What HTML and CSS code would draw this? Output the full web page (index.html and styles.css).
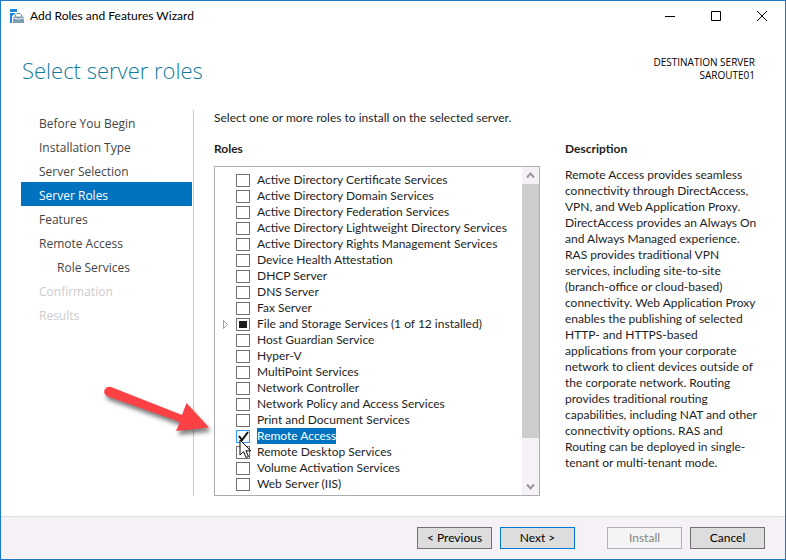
FILE: index.html
```html
<!DOCTYPE html>
<html lang="en">
<head>
    <meta charset="UTF-8">
    <meta name="viewport" content="width=device-width, initial-scale=1.0">
    <title>Add Roles and Features Wizard</title>
    <link rel="stylesheet" href="styles.css">
</head>
<body>
    <div class="window">
        <!-- Title bar -->
        <header class="titlebar">
            <svg class="app-icon" width="16" height="16" viewBox="0 0 16 16">
                <path fill="#1e88e0" d="M1 1h7v3H1zM1 5h5v1L3 8v7H1z"/>
                <path fill="none" stroke="#6f8ea3" d="M6.500 8.500V7l1.500-1.500h3L12.500 7v1.500"/>
                <path fill="#7d9db3" d="M4 9.500L5 8.500h9l1 1V15H4z"/>
                <path fill="none" stroke="#dbe6ed" d="M4 10.500h4.500v1h2v-1H15"/>
            </svg>
            <span class="title">Add Roles and Features Wizard</span>
            <button class="caption-btn" aria-label="Minimize">
                <svg width="10" height="10"><path d="M0 5.500h10"/></svg>
            </button>
            <button class="caption-btn" aria-label="Maximize">
                <svg width="10" height="10"><path d="M.5.5h9v9h-9z"/></svg>
            </button>
            <button class="caption-btn" aria-label="Close">
                <svg width="10" height="10"><path d="M0 0l10 10M10 0L0 10"/></svg>
            </button>
        </header>

        <!-- Page heading -->
        <div class="heading">
            <h1>Select server roles</h1>
            <div class="destination">DESTINATION SERVER<br>SAROUTE01</div>
        </div>

        <div class="content">
            <!-- Wizard steps -->
            <nav class="steps">
                <a href="#">Before You Begin</a>
                <a href="#">Installation Type</a>
                <a href="#">Server Selection</a>
                <a href="#" class="current">Server Roles</a>
                <a href="#">Features</a>
                <a href="#">Remote Access</a>
                <a href="#" class="sub">Role Services</a>
                <a class="disabled">Confirmation</a>
                <a class="disabled">Results</a>
            </nav>

            <main class="page">
                <p class="intro">Select one or more roles to install on the selected server.</p>
                <div class="columns">
                    <section class="roles">
                        <h2>Roles</h2>
                        <div class="role-box">
                            <div class="role-list">
                                <label><input type="checkbox"><span>Active Directory Certificate Services</span></label>
                                <label><input type="checkbox"><span>Active Directory Domain Services</span></label>
                                <label><input type="checkbox"><span>Active Directory Federation Services</span></label>
                                <label><input type="checkbox"><span>Active Directory Lightweight Directory Services</span></label>
                                <label><input type="checkbox"><span>Active Directory Rights Management Services</span></label>
                                <label><input type="checkbox"><span>Device Health Attestation</span></label>
                                <label><input type="checkbox"><span>DHCP Server</span></label>
                                <label><input type="checkbox"><span>DNS Server</span></label>
                                <label><input type="checkbox"><span>Fax Server</span></label>
                                <label>
                                    <svg class="expander" width="6" height="9"><path d="M.5.5v8l4-4z"/></svg>
                                    <input type="checkbox" class="partial"><span>File and Storage Services (1 of 12 installed)</span>
                                </label>
                                <label><input type="checkbox"><span>Host Guardian Service</span></label>
                                <label><input type="checkbox"><span>Hyper-V</span></label>
                                <label><input type="checkbox"><span>MultiPoint Services</span></label>
                                <label><input type="checkbox"><span>Network Controller</span></label>
                                <label><input type="checkbox"><span>Network Policy and Access Services</span></label>
                                <label><input type="checkbox"><span>Print and Document Services</span></label>
                                <label class="selected">
                                    <input type="checkbox" checked><span>Remote Access</span>
                                    <!-- Red arrow pointing at the role -->
                                    <svg class="callout" width="112" height="60" viewBox="0 0 112 60">
                                        <path d="M4.500 7a5 5 0 0 1 6.500-3L82 32l4.500-12L109 44.500 76 48l4-9L8 13.500A5 5 0 0 1 4.500 7z"/>
                                    </svg>
                                    <svg class="pointer" width="13" height="20" viewBox="0 0 13 20">
                                        <path d="M1 1v15l3.500-3.300 2.600 5.800 2.400-1-2.600-5.700h4.800z"/>
                                    </svg>
                                </label>
                                <label><input type="checkbox"><span>Remote Desktop Services</span></label>
                                <label><input type="checkbox"><span>Volume Activation Services</span></label>
                                <label><input type="checkbox"><span>Web Server (IIS)</span></label>
                            </div>
                            <div class="scrollbar">
                                <svg width="17" height="17"><path d="M5 10.500l3.500-4 3.500 4"/></svg>
                                <div class="thumb"></div>
                                <div class="track"></div>
                                <svg width="17" height="17"><path d="M5 6.500l3.500 4 3.500-4"/></svg>
                            </div>
                        </div>
                    </section>

                    <section class="description">
                        <h2>Description</h2>
                        <p>Remote Access provides seamless connectivity through DirectAccess, VPN, and Web Application Proxy. DirectAccess provides an Always On and Always Managed experience. RAS provides traditional VPN services, including site-to-site (branch-office or cloud-based) connectivity. Web Application Proxy enables the publishing of selected HTTP- and HTTPS-based applications from your corporate network to client devices outside of the corporate network. Routing provides traditional routing capabilities, including NAT and other connectivity options. RAS and Routing can be deployed in single-tenant or multi-tenant mode.</p>
                    </section>
                </div>
            </main>
        </div>

        <!-- Wizard buttons -->
        <footer class="buttons">
            <button>&lt; Previous</button>
            <button class="default">Next &gt;</button>
            <button class="install" disabled>Install</button>
            <button>Cancel</button>
        </footer>
    </div>
</body>
</html>
```
FILE: styles.css
```css
* {
    box-sizing: border-box;
}

body {
    margin: 0;
    font-family: Lato, "Open Sans", sans-serif;
    font-size: 12px;
    line-height: 16px;
    color: #1e1e1e;
}

h1, h2, p {
    margin: 0;
}

button, input {
    font: inherit;
    margin: 0;
}

.window {
    display: flex;
    flex-direction: column;
    min-height: 100vh;
    border: 1px solid #1979ca;
    background-color: #fff;
}

/* Title bar */
.titlebar {
    display: flex;
    align-items: center;
    height: 29px;
    padding-left: 8px;
    color: #000;
}

.title {
    flex: 1;
    margin-left: 5px;
}

.caption-btn {
    display: flex;
    justify-content: center;
    align-items: center;
    width: 46px;
    height: 28px;
    padding: 0;
    border: none;
    background: none;
}

.caption-btn svg {
    fill: none;
    stroke: #000;
    overflow: visible;
}

/* Heading */
.heading {
    display: flex;
    justify-content: space-between;
    height: 80px;
    padding: 24px 30px 0 21px;
}

h1 {
    font-family: "Open Sans", sans-serif;
    font-size: 22px;
    font-weight: 300;
    line-height: 32px;
    color: #107c9e;
}

.destination {
    font-family: "Open Sans", sans-serif;
    font-size: 10px;
    line-height: 13px;
    padding-top: 2px;
    text-align: right;
    color: #000;
}

.content {
    flex: 1;
    display: flex;
    padding: 0 20px 20px;
}

/* Steps on the left */
.steps {
    width: 173px;
    flex-shrink: 0;
    padding-right: 1px;
    border-right: 1px solid #ccc;
    font-family: "Open Sans", sans-serif;
    font-size: 12px;
}

.steps a {
    display: block;
    height: 24px;
    padding-top: 2px;
    padding-left: 18px;
    line-height: 24px;
    color: #444;
    text-decoration: none;
}

.steps .current {
    background-color: #0072c0;
    color: #fff;
}

.steps .sub {
    padding-left: 36px;
}

.steps .disabled {
    color: #ccc;
}

/* Page body */
.page {
    flex: 1;
    display: flex;
    flex-direction: column;
    padding-left: 20px;
}

.columns {
    flex: 1;
    display: grid;
    grid-template-columns: 326fr 200fr;
    gap: 25px;
    padding-top: 15px;
}

h2 {
    font-size: 12px;
    font-weight: 700;
    line-height: 16px;
}

.roles {
    display: flex;
    flex-direction: column;
}

.role-box {
    flex: 1;
    display: flex;
    margin-top: 9px;
    border: 1px solid #abadb3;
}

.role-list {
    flex: 1;
    padding: 5px 0 3px 21px;
    white-space: nowrap;
}

.role-list label {
    display: flex;
    align-items: center;
    position: relative;
    height: 16px;
}

.role-list span {
    margin-left: 7px;
}

.role-list input {
    appearance: none;
    width: 14px;
    height: 13px;
    border: 1px solid #707070;
    background-color: #fff;
}

.role-list .partial {
    background-color: #1e1e1e;
    background-clip: content-box;
    padding: 2px;
}

.role-list input:checked {
    border-color: #3399ff;
    background: #f3f9ff url("data:image/svg+xml,%3Csvg xmlns='http://www.w3.org/2000/svg' viewBox='0 0 12 11'%3E%3Cpath d='M2 5l3 4 6-8' fill='none' stroke='%23111' stroke-width='2'/%3E%3C/svg%3E") center / 12px 11px no-repeat;
}

.selected span {
    background-color: #0072c0;
    color: #fff;
}

.expander {
    position: absolute;
    left: -13px;
    fill: none;
    stroke: #a0a0a0;
}

.callout {
    position: absolute;
    left: -136px;
    top: -45px;
    overflow: visible;
    fill: #fb4143;
    filter: drop-shadow(2px 4px 2px rgba(0, 0, 0, 0.5));
}

.pointer {
    position: absolute;
    left: 3px;
    top: 11px;
    z-index: 1;
    fill: #fff;
    stroke: #000;
}

.scrollbar {
    display: flex;
    flex-direction: column;
    width: 17px;
    background-color: #f6f1f6;
}

.scrollbar svg {
    fill: none;
    stroke: #999;
    stroke-width: 2;
}

.thumb {
    flex: 254;
    background-color: #cdcdcd;
}

.track {
    flex: 40;
}

.description p {
    margin-top: 10px;
    padding-right: 4px;
}

/* Footer */
.buttons {
    display: flex;
    justify-content: flex-end;
    gap: 8px;
    padding: 10px 20px;
    border-top: 1px solid #dfdbdf;
    background-color: #f6f1f6;
}

.buttons button {
    width: 75px;
    height: 22px;
    padding: 0;
    border: 1px solid #707070;
    background-color: #ddd;
    color: #000;
}

.buttons .default {
    border-color: #0078d7;
}

.buttons .install {
    margin-left: 24px;
    border-color: #adb2b5;
    background-color: #f4f4f4;
    color: #838383;
}
```
